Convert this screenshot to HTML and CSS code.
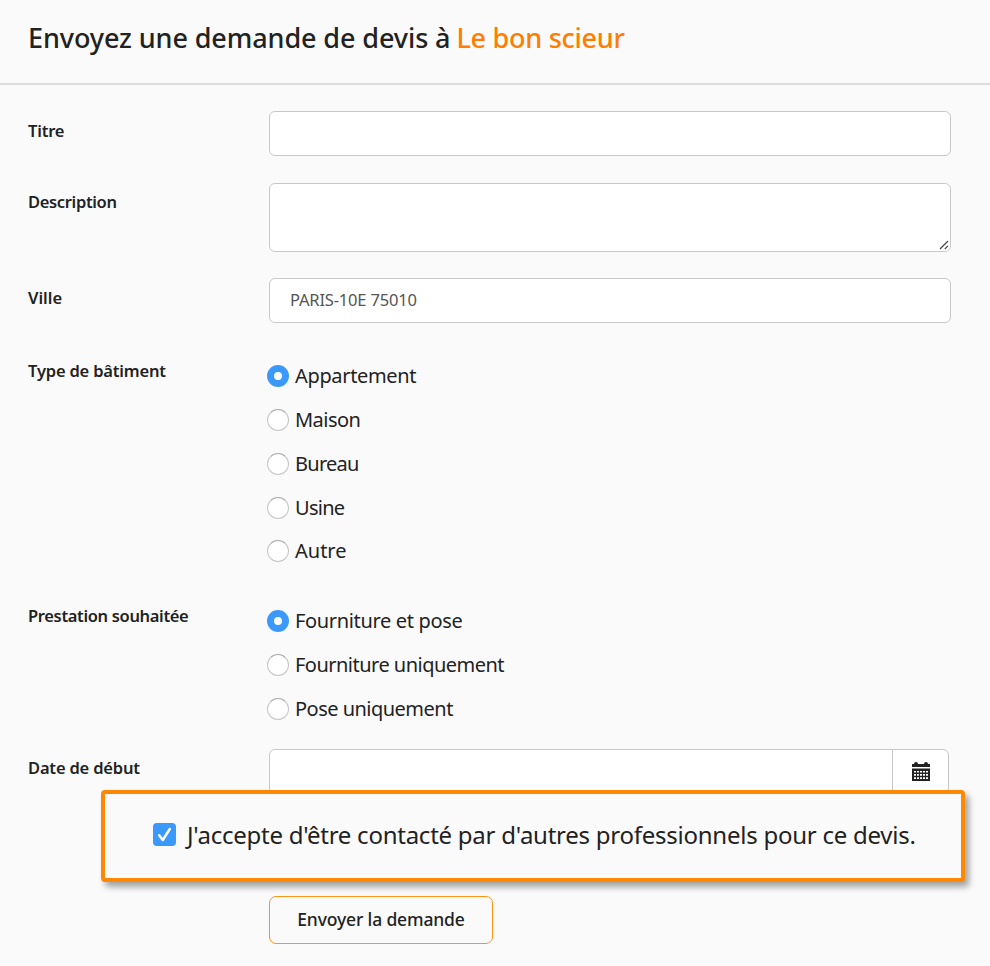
FILE: index.html
```html
<!DOCTYPE html>
<html lang="fr">
<head>
<meta charset="utf-8">
<title>Demande de devis</title>
<link rel="stylesheet" href="styles.css">
</head>
<body>
<header class="header">
  <h1 class="title"><span class="lead">Envoyez une demande de devis à</span> <span class="company">Le bon scieur</span></h1>
</header>
<form class="form">
  <div class="row">
    <label class="label" for="titre"><span class="snug">Titre</span></label>
    <input class="input" id="titre" type="text">
  </div>
  <div class="row row-short">
    <label class="label" for="description"><span class="tight">Description</span></label>
    <div class="area">
      <textarea class="input textarea" id="description"></textarea>
      <svg class="grip" viewBox="0 0 10 10"><path d="M1 9 9 1M5.8 9 9 5.8"/></svg>
    </div>
  </div>
  <div class="row row-city">
    <label class="label" for="ville">Ville</label>
    <input class="input city snug" id="ville" type="text" value="PARIS-10E 75010">
  </div>
  <div class="row row-type">
    <div class="label"><span class="snug">Type de bâtiment</span></div>
    <div class="choices">
      <label class="choice"><input class="radio" type="radio" name="type" checked><span class="tight">Appartement</span></label>
      <label class="choice"><input class="radio" type="radio" name="type"><span class="tighter">Maison</span></label>
      <label class="choice"><input class="radio" type="radio" name="type"><span class="tightest">Bureau</span></label>
      <label class="choice"><input class="radio" type="radio" name="type"><span class="tightest">Usine</span></label>
      <label class="choice"><input class="radio" type="radio" name="type"><span>Autre</span></label>
    </div>
  </div>
  <div class="row row-service">
    <div class="label"><span class="tight">Prestation souhaitée</span></div>
    <div class="choices">
      <label class="choice"><input class="radio" type="radio" name="service" checked><span class="tight">Fourniture et pose</span></label>
      <label class="choice"><input class="radio" type="radio" name="service"><span class="tighter">Fourniture uniquement</span></label>
      <label class="choice"><input class="radio" type="radio" name="service"><span class="tighter">Pose uniquement</span></label>
    </div>
  </div>
  <div class="row row-short">
    <label class="label" for="date"><span class="snug">Date de début</span></label>
    <div class="date">
      <input class="date-input" id="date" type="text">
      <span class="date-button">
        <svg class="calendar" viewBox="0 0 18 19"><path d="M0 2h2a2 2 0 0 1 4 0h6a2 2 0 0 1 4 0h2v3H0z"/><path fill-rule="evenodd" d="M0 6.5h18V19H0zM2 9v1.6h2V9zm3 0v1.6h2V9zm3 0v1.6h2V9zm3 0v1.6h2V9zm3 0v1.6h2V9zM2 12v1.8h2V12zm3 0v1.8h2V12zm3 0v1.8h2V12zm3 0v1.8h2V12zm3 0v1.8h2V12zM2 15.2v1.8h2v-1.8zm3 0v1.8h2v-1.8zm3 0v1.8h2v-1.8zm3 0v1.8h2v-1.8zm3 0v1.8h2v-1.8z"/></svg>
      </span>
    </div>
  </div>
  <button class="submit" type="button">Envoyer la demande</button>
</form>
<label class="consent">
  <input class="check" type="checkbox" checked>
  <svg class="tick" viewBox="0 0 23 23"><path d="M6.2 12.3 9.8 17 16.8 6"/></svg>
  <span class="consent-text">J'accepte d'être contacté par d'autres professionnels pour ce devis.</span>
</label>
</body>
</html>
```
FILE: styles.css
```css
* { box-sizing: border-box; }
body { margin: 0; position: relative; height: 966px; overflow: hidden; background: #fafafa; color: #222; font-family: "Noto Sans", sans-serif; }
.header { height: 85px; border-bottom: 2px solid #dcdddd; padding-left: 28px; }
.title { margin: 0; font-size: 27px; font-weight: 500; line-height: 76px; white-space: nowrap; }
.lead { letter-spacing: -0.1px; }
.company { margin-left: -1px; letter-spacing: -0.27px; color: #ff7d00; }
.form { padding: 26px 39px 0 28px; }
.row { display: grid; grid-template-columns: 241px 1fr; align-items: start; margin-bottom: 27px; }
.label { font-size: 16.5px; font-weight: 600; line-height: 39px; white-space: nowrap; }
.row-short .label { line-height: 38px; }
.snug { letter-spacing: -0.18px; }
.tight { letter-spacing: -0.34px; }
.tighter { letter-spacing: -0.52px; }
.tightest { letter-spacing: -0.72px; }
.input { display: block; width: 682px; height: 45px; margin: 0; border: 1px solid #c8c8c8; border-radius: 6px; background: #fff; outline: 0; }
.area { position: relative; }
.textarea { height: 69px; resize: none; }
.grip { position: absolute; right: 2px; bottom: 2px; width: 10px; height: 10px; fill: none; stroke: #444; stroke-width: 1.2; }
.row-city { margin-top: -1px; margin-bottom: 28px; }
.city { padding: 0 20px 2px; font-family: inherit; font-size: 16.5px; color: #555; }
.row-type { height: 218px; }
.choices { padding-top: 3.5px; }
.choice { display: flex; align-items: center; gap: 6px; height: 43.75px; font-size: 20px; white-space: nowrap; }
.choice span { margin: -0.6px 0 0.6px; }
.radio { appearance: none; width: 22px; height: 22px; margin: 0 0 0 -2px; border: 1px solid #c6c6c6; border-top-color: #aaa; border-radius: 50%; background: #fff; }
.radio:checked { border: 7px solid #3b99fc; }
.row-service { height: 126px; }
.date { display: flex; width: 680px; height: 45px; border: 1px solid #c8c8c8; border-radius: 6px; background: #fff; }
.date-input { flex: 1; border: 0; border-right: 1px solid #c8c8c8; background: none; }
.date-button { display: flex; width: 55px; justify-content: center; padding-top: 12px; }
.calendar { width: 18px; height: 19px; fill: #222; }
.submit { display: block; width: 224px; height: 48px; margin: 102px 0 0 241px; padding: 0 0 2px; border: 1px solid #ff9416; border-radius: 7px; background: #fafafa; color: #222; font: 500 17.5px/44px "Noto Sans", sans-serif; letter-spacing: -0.15px; white-space: nowrap; }
.consent { position: absolute; left: 101px; top: 790px; display: flex; align-items: center; width: 864px; height: 92px; padding: 0 0 3px 48px; border: 4px solid #ff8800; border-radius: 4px; background: #fafafa; box-shadow: 4px 5px 6px rgba(0,0,0,.35); font-size: 24px; white-space: nowrap; }
.consent-text { letter-spacing: -0.25px; }
.check { appearance: none; width: 23px; height: 23px; margin: 0; border-radius: 4px; background: #3b99fc; }
.tick { width: 23px; height: 23px; margin: 0 11px 0 -23px; fill: none; stroke: #fff; stroke-width: 2.5; stroke-linecap: round; stroke-linejoin: round; }
```
